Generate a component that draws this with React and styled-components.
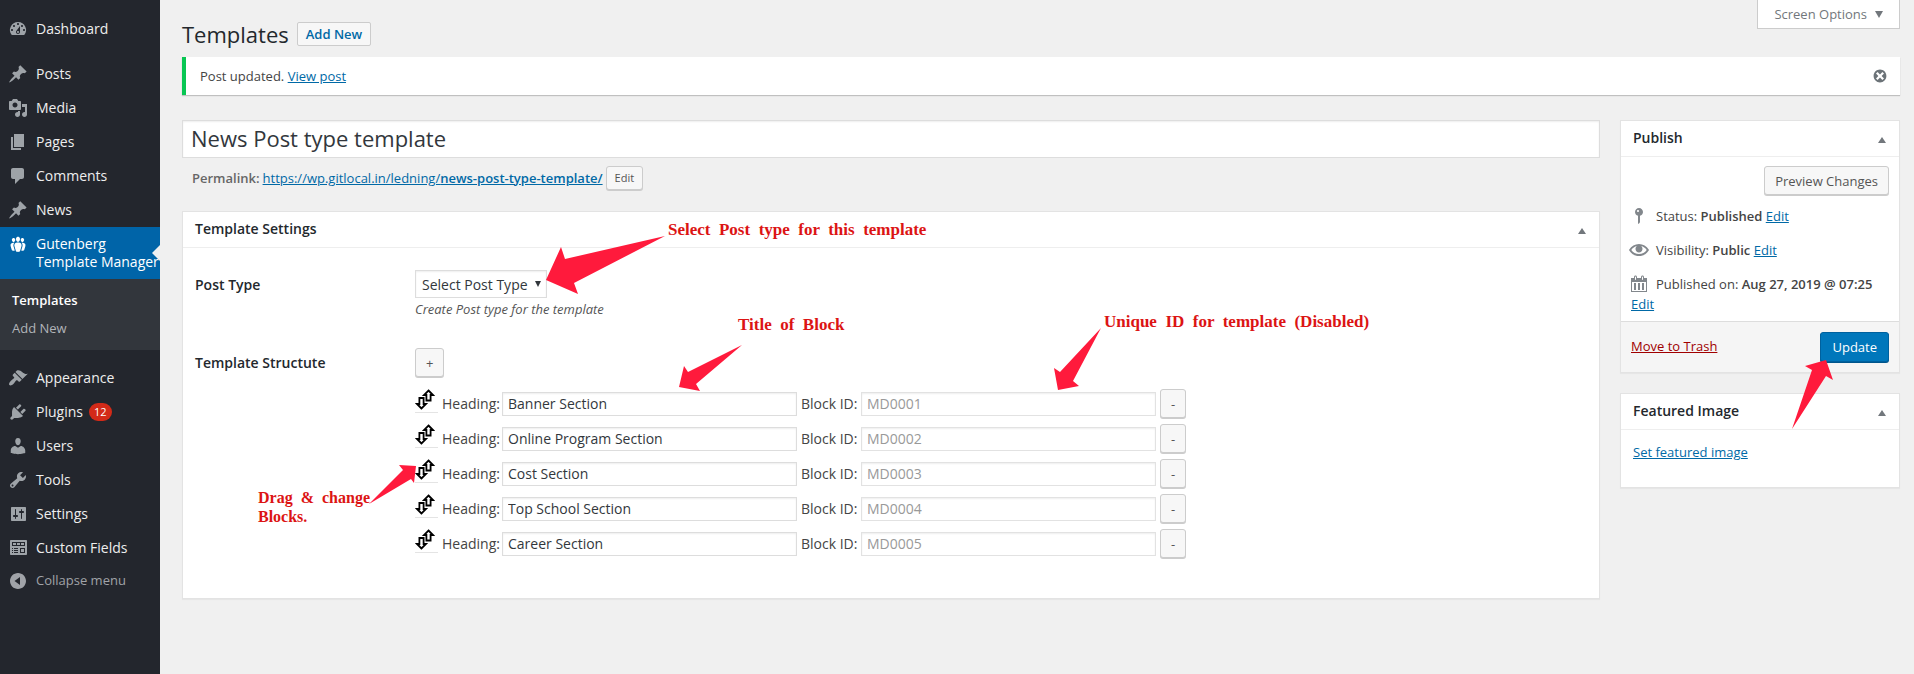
import React from "react";
import styled, { createGlobalStyle, css } from "styled-components";

const Global = createGlobalStyle`
  *, *::before, *::after { box-sizing: border-box; }
  html, body { margin: 0; padding: 0; background: #f0f0f0; }
  body, button, input, select {
    font-family: "Open Sans", "Noto Sans", sans-serif;
  }
  body { font-size: 13px; line-height: 20px; color: #444; }
  a { color: #0069a6; }
  strong { font-weight: 600; }
`;

const Page = styled.div`
  display: flex;
  align-items: stretch;
  min-height: 100vh;
`;

/* ---------- icons ---------- */

const ICONS = {
  dashboard:
    "M3.76 16h12.48A7.998 7.998 0 0 0 10 3a7.998 7.998 0 0 0-6.24 13zM10 4c.55 0 1 .45 1 1s-.45 1-1 1-1-.45-1-1 .45-1 1-1zM6 6c.55 0 1 .45 1 1s-.45 1-1 1-1-.45-1-1 .45-1 1-1zm8 0c.55 0 1 .45 1 1s-.45 1-1 1-1-.45-1-1 .45-1 1-1zm-5.37 5.55L12 7v6c0 1.1-.9 2-2 2s-2-.9-2-2c0-.57.24-1.08.63-1.45zM4 10c.55 0 1 .45 1 1s-.45 1-1 1-1-.45-1-1 .45-1 1-1zm12 0c.55 0 1 .45 1 1s-.45 1-1 1-1-.45-1-1 .45-1 1-1zm-5 3c0-.55-.45-1-1-1s-1 .45-1 1 .45 1 1 1 1-.45 1-1z",
  pin: "M10.44 3.02l1.82-1.82 6.36 6.35-1.83 1.82c-1.05-.68-2.48-.57-3.41.36l-.75.75c-.92.93-1.04 2.35-.35 3.41l-1.83 1.82-2.41-2.41-2.8 2.79c-.42.42-3.38 2.71-3.8 2.29s1.86-3.39 2.28-3.81l2.79-2.79L4.1 9.36l1.83-1.82c1.05.69 2.48.57 3.4-.36l.75-.75c.93-.92 1.05-2.35.36-3.41z",
  media:
    "M13 11V4c0-.55-.45-1-1-1h-1.67L9 1H5L3.67 3H2c-.55 0-1 .45-1 1v7c0 .55.45 1 1 1h10c.55 0 1-.45 1-1zM7 4.5c1.38 0 2.5 1.12 2.5 2.5S8.38 9.5 7 9.5 4.5 8.38 4.5 7 5.62 4.5 7 4.5zM14 6h5v10.5c0 1.38-1.12 2.5-2.5 2.5S14 17.88 14 16.5s1.12-2.5 2.5-2.5c.17 0 .34.02.5.05V9h-3V6zm-4 8.05V13h2v3.5c0 1.38-1.12 2.5-2.5 2.5S7 17.88 7 16.5 8.12 14 9.5 14c.17 0 .34.02.5.05z",
  pages: "M6 15V2h10v13H6zm-1 1h8v2H3V5h2v11z",
  comments:
    "M5 2h9c1.1 0 2 .9 2 2v7c0 1.1-.9 2-2 2h-2l-5 5v-5H5c-1.1 0-2-.9-2-2V4c0-1.1.9-2 2-2z",
  groups:
    "M8.03 4.46c-.29 1.28.55 3.46 1.97 3.46 1.41 0 2.25-2.18 1.96-3.46-.22-.98-1.08-1.63-1.96-1.63-.89 0-1.74.65-1.97 1.63zm-4.13.9c-.25 1.08.47 2.93 1.67 2.93s1.92-1.85 1.67-2.93c-.19-.83-.92-1.39-1.67-1.39s-1.48.56-1.67 1.39zm8.86 0c-.25 1.08.47 2.93 1.66 2.93 1.2 0 1.92-1.85 1.67-2.93-.19-.83-.92-1.39-1.67-1.39-.74 0-1.47.56-1.66 1.39zm-.59 11.43l1.25-4.3C14.2 10 12.71 8.47 10 8.47c-2.72 0-4.21 1.53-3.44 4.02l1.26 4.3C8.05 17.51 9 18 10 18c.98 0 1.94-.49 2.17-1.21zm-6.1-7.63c-.49.67-.96 1.83-.42 3.59l1.12 3.79c-.34.2-.77.31-1.2.31-.85 0-1.65-.41-1.85-1.03l-1.07-3.65c-.65-2.11.61-3.4 2.92-3.4.27 0 .54.02.79.06-.1.1-.2.22-.29.33zm8.35-.39c2.31 0 3.58 1.29 2.92 3.4l-1.07 3.65c-.2.62-1 1.03-1.85 1.03-.43 0-.86-.11-1.2-.31l1.11-3.77c.55-1.78.08-2.94-.42-3.61-.08-.11-.18-.23-.28-.33.25-.04.51-.06.79-.06z",
  appearance:
    "M14.48 11.06L7.41 3.99l1.5-1.5c.5-.56 2.3-.47 3.51.32 1.21.8 1.43 1.28 2.91 2.1 1.18.64 2.45 1.26 4.45.85zm-.71.71L6.7 4.7 4.93 6.47c-.39.39-.39 1.02 0 1.41l1.06 1.06c.39.39.39 1.03 0 1.42-.6.6-1.43 1.11-2.21 1.69-.35.26-.7.53-1.01.84C1.43 14.23.4 16.08 1.4 17.07c.99 1 2.84-.03 4.18-1.36.31-.31.58-.66.85-1.02.57-.78 1.08-1.61 1.69-2.21.39-.39 1.02-.39 1.41 0l1.06 1.06c.39.39 1.02.39 1.41 0z",
  plugins:
    "M13.11 4.36L9.87 7.6 8 5.73l3.24-3.24c.35-.34 1.05-.2 1.56.32.52.51.66 1.21.31 1.55zm-8 1.77l.91-1.12 9.01 9.01-1.19.84c-.71.71-2.63 1.16-3.82 1.16H6.14L4.9 17.26c-.59.59-1.54.59-2.12 0-.59-.58-.59-1.53 0-2.12l1.24-1.24v-3.88c0-1.13.4-3.19 1.09-3.89zm7.26 3.97l3.24-3.24c.34-.35 1.04-.21 1.55.31.52.51.66 1.21.31 1.55l-3.24 3.25z",
  users:
    "M10 9.25c-2.27 0-2.73-3.44-2.73-3.44C7 4.02 7.82 2 9.97 2c2.16 0 2.98 2.02 2.71 3.81 0 0-.41 3.44-2.68 3.44zm0 2.57L12.72 10c2.39 0 4.52 2.33 4.52 4.53v2.49s-3.65 1.13-7.24 1.13c-3.65 0-7.24-1.13-7.24-1.13v-2.49c0-2.25 1.94-4.48 4.47-4.48z",
  tools:
    "M16.68 9.77c-1.34 1.34-3.3 1.67-4.95.99l-5.41 6.52c-.99.99-2.59.99-3.58 0s-.99-2.59 0-3.57l6.52-5.42c-.68-1.65-.35-3.61.99-4.95 1.28-1.28 3.12-1.62 4.72-1.06l-2.89 2.89 2.82 2.82 2.86-2.87c.53 1.58.18 3.39-1.08 4.65zM3.81 16.21c.4.39 1.04.39 1.43 0 .4-.4.4-1.04 0-1.43-.39-.4-1.03-.4-1.43 0-.39.39-.39 1.03 0 1.43z",
  settings:
    "M18 16V4c0-.6-.4-1-1-1H4c-.6 0-1 .4-1 1v12c0 .6.4 1 1 1h13c.6 0 1-.4 1-1zM8 11h1c.55 0 1 .45 1 1s-.45 1-1 1H8v1.5c0 .28-.22.5-.5.5s-.5-.22-.5-.5V13H6c-.55 0-1-.45-1-1s.45-1 1-1h1V5.5c0-.28.22-.5.5-.5s.5.22.5.5V11zm5-2h-1c-.55 0-1-.45-1-1s.45-1 1-1h1V5.5c0-.28.22-.5.5-.5s.5.22.5.5V7h1c.55 0 1 .45 1 1s-.45 1-1 1h-1v5.5c0 .28-.22.5-.5.5s-.5-.22-.5-.5V9z",
  fields:
    "M19 16V3c0-.55-.45-1-1-1H3c-.55 0-1 .45-1 1v13c0 .55.45 1 1 1h15c.55 0 1-.45 1-1zM4 4h13v4H4V4zm1 1v2h3V5H5zm4 0v2h3V5H9zm4 0v2h3V5h-3zM4 10h1v1H4zm2 0h4v1H6zm6 0h5v5h-5v-5zM4 12h1v1H4zm2 0h4v1H6zm7-1v3h3v-3h-3zM4 14h1v1H4zm2 0h4v1H6z",
  collapse:
    "M10 2c4.42 0 8 3.58 8 8s-3.58 8-8 8-8-3.58-8-8 3.58-8 8-8zM12 6L6.500 10l5.500 4z",
  status:
    "M14 6c0 1.86-1.28 3.41-3 3.86V16c0 1-2 2-2 2V9.86c-1.72-.45-3-2-3-3.86 0-2.21 1.79-4 4-4s4 1.79 4 4zM8 5c0 .55.45 1 1 1s1-.45 1-1-.45-1-1-1-1 .45-1 1z",
  visibility:
    "M19.7 9.4C17.7 6 14 3.9 10 3.9S2.3 6 .3 9.4L0 10l.3.6c2 3.4 5.7 5.5 9.7 5.5s7.7-2.1 9.7-5.5l.3-.6-.3-.6zM10 14.1c-3.1 0-6-1.6-7.7-4.1C3.6 8 5.7 6.6 8 6.1c-.9.6-1.5 1.7-1.5 2.9 0 1.9 1.6 3.5 3.5 3.5s3.5-1.6 3.5-3.5c0-1.2-.6-2.3-1.5-2.9 2.3.5 4.4 1.9 5.7 3.9-1.7 2.5-4.6 4.1-7.700 4.100z",
  calendar:
    "M15 4h3v14H2V4h3V3c0-.83.67-1.5 1.5-1.5S8 2.170 8 3v1h4V3c0-.83.67-1.5 1.5-1.5S15 2.170 15 3v1zM6 3v2.500c0 .28.22.5.5.5s.5-.22.5-.5V3c0-.28-.22-.5-.5-.5S6 2.720 6 3zm7 0v2.500c0 .28.22.5.5.5s.5-.22.5-.5V3c0-.28-.22-.5-.5-.5s-.5.22-.5.5zm4 14V8H3v9h14zM7 16V9H5v7h2zm4 0V9H9v7h2zm4 0V9h-2v7h2z",
  dismiss:
    "M10 2c4.42 0 8 3.58 8 8s-3.58 8-8 8-8-3.58-8-8 3.58-8 8-8zm5 11l-3-3 3-3-2-2-3 3-3-3-2 2 3 3-3 3 2 2 3-3 3 3z",
};

const Svg = styled.svg`
  display: block;
  flex: none;
  fill: currentColor;
`;

function Icon({ name, size = 20 }) {
  return (
    <Svg width={size} height={size} viewBox="0 0 20 20" fillRule="evenodd" aria-hidden="true">
      <path d={ICONS[name]} />
    </Svg>
  );
}

/* ---------- sidebar ---------- */

const Sidebar = styled.nav`
  flex: none;
  width: 160px;
  padding-top: 12px;
  background: #23262d;
`;

const MenuLink = styled.a`
  position: relative;
  display: flex;
  gap: 8px;
  padding: 8px 0 8px 8px;
  font-size: 14px;
  line-height: 18px;
  text-decoration: none;
  color: ${(p) => (p.$active ? "#fff" : "#eee")};
  background: ${(p) => (p.$active ? "#0064a8" : "transparent")};
  white-space: nowrap;
  & > svg { color: ${(p) => (p.$active ? "#fff" : "#9ea3a8")}; height: 20px; margin: -1px 0; }
  ${(p) =>
    p.$active &&
    css`
      &::after {
        content: "";
        position: absolute;
        right: 0;
        top: 18px;
        border: 8px solid transparent;
        border-right-color: #f0f0f0;
      }
    `}
`;

const Separator = styled.div`
  height: 11px;
`;

const Submenu = styled.div`
  display: flex;
  flex-direction: column;
  padding: 7px 0 8px 12px;
  background: #32363c;
`;

const SubLink = styled.a`
  padding: 4px 0;
  font-size: 13px;
  line-height: 20px;
  text-decoration: none;
  font-weight: ${(p) => (p.$current ? 600 : 400)};
  color: ${(p) => (p.$current ? "#fff" : "#b1b4b9")};
`;

const Count = styled.span`
  align-self: center;
  margin: 0 -2px;
  padding: 0 5px;
  border-radius: 9px;
  min-width: 22px;
  text-align: center;
  background: #d32a18;
  color: #fff;
  font-size: 11px;
  line-height: 18px;
`;

const CollapseButton = styled.button`
  display: flex;
  gap: 8px;
  width: 100%;
  padding: 6px 0 8px 8px;
  border: 0;
  background: none;
  color: #a0a3a8;
  font-size: 13px;
  line-height: 18px;
  text-align: left;
`;

/* ---------- main area ---------- */

const Content = styled.div`
  flex: 1;
  min-width: 0;
  padding: 0 14px 24px 22px;
`;

const TopBar = styled.div`
  display: flex;
  justify-content: space-between;
  align-items: flex-start;
  height: 57px;
`;

const Heading = styled.div`
  display: flex;
  align-items: center;
  gap: 8px;
  padding-top: 18px;
`;

const Title = styled.h1`
  margin: 0;
  font-size: 22px;
  line-height: 32px;
  font-weight: 400;
  color: #23282d;
`;

const AddNew = styled.a`
  padding: 0 8px;
  border: 1px solid #ccc;
  border-radius: 2px;
  background: #f7f7f7;
  font-weight: 600;
  font-size: 13px;
  line-height: 22px;
  text-decoration: none;
`;

const ScreenOptions = styled.button`
  display: flex;
  align-items: center;
  gap: 8px;
  height: 29px;
  padding: 0 16px;
  border: 1px solid #ccc;
  border-top: 0;
  background: #fff;
  color: #72777c;
  font-size: 13px;
`;

const Triangle = styled.span`
  width: 0;
  height: 0;
  border: 4px solid transparent;
  ${(p) =>
    p.$up
      ? "border-top: 0; border-bottom: 6px solid #72777c;"
      : "border-bottom: 0; border-top: 7px solid #72777c;"}
`;

const Notice = styled.div`
  display: flex;
  justify-content: space-between;
  align-items: center;
  height: 38px;
  padding: 0 12px 0 14px;
  border-left: 4px solid #08c653;
  background: #fff;
  box-shadow: 0 1px 1px rgba(0, 0, 0, 0.2);
`;

const IconButton = styled.button`
  display: flex;
  padding: 0;
  border: 0;
  background: none;
  color: #6c7378;
`;

const Columns = styled.div`
  display: flex;
  align-items: flex-start;
  gap: 20px;
  margin-top: 25px;
`;

const Editor = styled.main`
  flex: 1;
  min-width: 0;
`;

const Side = styled.aside`
  flex: none;
  width: 280px;
  display: flex;
  flex-direction: column;
  gap: 20px;
`;

const TextInput = styled.input`
  height: 24px;
  width: 295px;
  padding: 0 5px;
  border: 1px solid #ddd;
  border-radius: 0;
  background: #fff;
  box-shadow: inset 0 1px 2px rgba(0, 0, 0, 0.07);
  color: #32373c;
  font-size: 14px;
  &:disabled { color: #999; border-color: #e2e2e2; }
`;

const TitleInput = styled(TextInput)`
  display: block;
  width: 100%;
  height: 38px;
  padding: 0 8px 2px;
  font-size: 22px;
`;

const Permalink = styled.div`
  display: flex;
  align-items: center;
  gap: 3px;
  height: 25px;
  margin: 7px 0 21px;
  padding-left: 10px;
  color: #666;
`;

const Button = styled.button`
  height: 29px;
  padding: 0 10px;
  border: 1px solid #ccc;
  border-radius: 3px;
  background: #f7f7f7;
  box-shadow: 0 1px 0 #ccc;
  color: #555;
  font-size: 13px;
`;

const SmallButton = styled(Button)`
  height: 24px;
  padding: 0 8px;
  font-size: 11px;
`;

const PrimaryButton = styled(Button)`
  height: 30px;
  padding: 0 11px;
  background: #0077bb;
  border-color: #00619e;
  box-shadow: 0 1px 0 #00568c;
  color: #fff;
`;

const Card = styled.section`
  position: relative;
  border: 1px solid #e3e3e3;
  background: #fff;
  box-shadow: 0 1px 1px rgba(0, 0, 0, 0.04);
`;

const CardHead = styled.header`
  display: flex;
  justify-content: space-between;
  align-items: center;
  height: 36px;
  padding: 0 13px 2px 12px;
  border-bottom: 1px solid #eee;
`;

const CardTitle = styled.h2`
  margin: 0;
  font-size: 14px;
  line-height: 20px;
  font-weight: 600;
  color: #23282d;
`;

const CardToggle = styled(IconButton)`
  padding-top: 5px;
`;

const Settings = styled.div`
  padding: 22px 12px 40px;
`;

const Setting = styled.div`
  display: grid;
  grid-template-columns: 220px 1fr;
  & + & { margin-top: 30px; }
`;

const SettingName = styled.div`
  padding-top: 5px;
  font-size: 14px;
  line-height: 20px;
  font-weight: 600;
  color: #23282d;
`;

const SelectWrap = styled.div`
  position: relative;
  width: 132px;
  &::after {
    content: "";
    position: absolute;
    right: 6px;
    top: 11px;
    border: 3px solid transparent;
    border-bottom: 0;
    border-top: 6px solid #32373c;
    pointer-events: none;
  }
`;

const Select = styled.select`
  appearance: none;
  display: block;
  width: 100%;
  height: 28px;
  padding: 0 0 0 6px;
  border: 1px solid #ddd;
  border-radius: 0;
  background: #fff;
  box-shadow: inset 0 1px 2px rgba(0, 0, 0, 0.07);
  color: #32373c;
  font-size: 14px;
`;

const Hint = styled.p`
  margin: 2px 0 0;
  font-size: 13px;
  line-height: 18px;
  font-style: italic;
  color: #555;
`;

const Blocks = styled.ul`
  display: flex;
  flex-direction: column;
  gap: 6px;
  margin: 12px 0 0;
  padding: 0;
  list-style: none;
`;

const Block = styled.li`
  display: flex;
  align-items: center;
  gap: 4px;
  height: 29px;
  font-size: 14px;
`;

const DragHandle = styled.span`
  display: flex;
  align-self: flex-start;
  height: 24px;
  width: 23px;
  border-bottom: 1px solid #e4e4e4;
  cursor: move;
`;

const Field = styled.label`
  display: grid;
  grid-template-columns: 60px auto;
  align-items: center;
  white-space: nowrap;
`;

const PublishBody = styled.div`
  display: flex;
  flex-direction: column;
  padding: 9px 10px 0;
`;

const Actions = styled.div`
  display: flex;
  justify-content: flex-end;
  margin-bottom: 4px;
`;

const Info = styled.div`
  padding: 7px 0;
  & > svg { float: left; margin: 0 7px 0 -2px; color: #82878c; }
`;

const PublishFoot = styled.footer`
  position: relative;
  display: flex;
  justify-content: space-between;
  align-items: flex-start;
  padding: 10px;
  border-top: 1px solid #ddd;
  background: #f5f5f5;
  height: 51px;
`;

const TrashLink = styled.a`
  color: #a00000;
  line-height: 28px;
`;

const FeaturedBody = styled.div`
  padding: 12px 12px 25px;
`;

/* ---------- callouts drawn over the form ---------- */

const ArrowSvg = styled.svg`
  position: absolute;
  z-index: 1;
  ${(p) => (p.$right ? `right: ${p.$right}px` : `left: ${p.$x}px`)};
  top: ${(p) => p.$y}px;
  fill: #ff1a3c;
  pointer-events: none;
`;

function Arrow({ x, y, right, w, h, points }) {
  return (
    <ArrowSvg $x={x} $y={y} $right={right} width={w} height={h} viewBox={`0 0 ${w} ${h}`} aria-hidden="true">
      <polygon points={points} />
    </ArrowSvg>
  );
}

const Note = styled.div`
  position: absolute;
  left: ${(p) => p.$x}px;
  top: ${(p) => p.$y}px;
  white-space: pre;
  font-family: "Liberation Serif", serif;
  font-weight: 700;
  font-size: ${(p) => (p.$compact ? 16 : 17)}px;
  line-height: 19px;
  color: #dc1414;
  pointer-events: none;
`;

const MENU_TOP = [
  ["pin", "Posts"],
  ["media", "Media"],
  ["pages", "Pages"],
  ["comments", "Comments"],
  ["pin", "News"],
];

const MENU_BOTTOM = [
  ["appearance", "Appearance"],
  ["plugins", "Plugins", 12],
  ["users", "Users"],
  ["tools", "Tools"],
  ["settings", "Settings"],
  ["fields", "Custom Fields"],
];

const BLOCKS = [
  ["Banner Section", "MD0001"],
  ["Online Program Section", "MD0002"],
  ["Cost Section", "MD0003"],
  ["Top School Section", "MD0004"],
  ["Career Section", "MD0005"],
];

function MenuItem({ icon, label, count }) {
  return (
    <MenuLink href="#">
      <Icon name={icon} />
      {label}
      {count && <Count>{count}</Count>}
    </MenuLink>
  );
}

function DragIcon() {
  return (
    <svg width="20" height="22" viewBox="0 0 20 22" aria-hidden="true" fill="#fff" stroke="#000" strokeWidth="1.8">
      <path d="M13.500 1.500L18 6H15.600V11.500H11.400V6H9z" />
      <path d="M6.500 19.500L2 15H4.400V9H8.600V15H11z" />
    </svg>
  );
}

function CardHeader({ title }) {
  return (
    <CardHead>
      <CardTitle>{title}</CardTitle>
      <CardToggle aria-label={`Toggle panel: ${title}`}>
        <Triangle $up />
      </CardToggle>
    </CardHead>
  );
}

export default function App() {
  return (
    <Page>
      <Global />
      <Sidebar>
        <MenuItem icon="dashboard" label="Dashboard" />
        <Separator />
        {MENU_TOP.map(([icon, label]) => (
          <MenuItem key={label} icon={icon} label={label} />
        ))}
        <MenuLink href="#" $active>
          <Icon name="groups" />
          <span>
            Gutenberg
            <br />
            Template Manager
          </span>
        </MenuLink>
        <Submenu>
          <SubLink href="#" $current>Templates</SubLink>
          <SubLink href="#">Add New</SubLink>
        </Submenu>
        <Separator />
        {MENU_BOTTOM.map(([icon, label, count]) => (
          <MenuItem key={label} icon={icon} label={label} count={count} />
        ))}
        <CollapseButton>
          <Icon name="collapse" />
          Collapse menu
        </CollapseButton>
      </Sidebar>

      <Content>
        <TopBar>
          <Heading>
            <Title>Templates</Title>
            <AddNew href="#">Add New</AddNew>
          </Heading>
          <ScreenOptions>
            Screen Options <Triangle />
          </ScreenOptions>
        </TopBar>

        <Notice>
          <span>
            Post updated. <a href="#">View post</a>
          </span>
          <IconButton aria-label="Dismiss this notice">
            <Icon name="dismiss" size={16} />
          </IconButton>
        </Notice>

        <Columns>
          <Editor>
            <TitleInput aria-label="Title" defaultValue="News Post type template" />
            <Permalink>
              <strong>Permalink:</strong>
              <a href="#">
                https://wp.gitlocal.in/ledning/<strong>news-post-type-template/</strong>
              </a>
              <SmallButton>Edit</SmallButton>
            </Permalink>

            <Card>
              <CardHeader title="Template Settings" />
              <Settings>
                <Setting>
                  <SettingName as="label" htmlFor="post-type">Post Type</SettingName>
                  <div>
                    <SelectWrap>
                      <Select id="post-type">
                        <option>Select Post Type</option>
                      </Select>
                    </SelectWrap>
                    <Hint>Create Post type for the template</Hint>
                  </div>
                </Setting>
                <Setting>
                  <SettingName>Template Structute</SettingName>
                  <div>
                    <Button>+</Button>
                    <Blocks>
                      {BLOCKS.map(([heading, id]) => (
                        <Block key={id}>
                          <DragHandle>
                            <DragIcon />
                          </DragHandle>
                          <Field>
                            Heading:
                            <TextInput defaultValue={heading} />
                          </Field>
                          <Field>
                            Block ID:
                            <TextInput disabled value={id} />
                          </Field>
                          <Button aria-label={`Remove ${heading}`}>-</Button>
                        </Block>
                      ))}
                    </Blocks>
                  </div>
                </Setting>
              </Settings>

              <Note $x={485} $y={8}>Select  Post  type  for  this  template</Note>
              <Arrow x={362} y={22} w={122} h={62} points="120,2 20,25 16,13 1,46 33,60 29,49" />
              <Note $x={555} $y={103}>Title  of  Block</Note>
              <Arrow x={493} y={132} w={68} h={50} points="66,1 12,28 8,22 3,43 24,47 20,40" />
              <Note $x={921} $y={100}>Unique  ID  for  template  (Disabled)</Note>
              <Arrow x={870} y={114} w={50} h={66} points="48,2 7,46 1,42 5,64 26,60 20,55" />
              <Note $x={75} $y={276} $compact>{"Drag  &  change\nBlocks."}</Note>
              <Arrow x={184} y={252} w={52} h={42} points="2,40 36,6 32,1 49,2 47,19 44,15" />
            </Card>
          </Editor>

          <Side>
            <Card>
              <CardHeader title="Publish" />
              <PublishBody>
                <Actions>
                  <Button>Preview Changes</Button>
                </Actions>
                <Info>
                  <Icon name="status" />
                  Status: <strong>Published</strong> <a href="#">Edit</a>
                </Info>
                <Info>
                  <Icon name="visibility" />
                  Visibility: <strong>Public</strong> <a href="#">Edit</a>
                </Info>
                <Info>
                  <Icon name="calendar" />
                  Published on: <strong>Aug 27, 2019 @ 07:25</strong> <a href="#">Edit</a>
                </Info>
              </PublishBody>
              <PublishFoot>
                <TrashLink href="#">Move to Trash</TrashLink>
                <PrimaryButton>Update</PrimaryButton>
                <Arrow right={65} y={36} w={44} h={72} points="2,71 22,12 15,8 36,2 43,22 36,18" />
              </PublishFoot>
            </Card>
            <Card>
              <CardHeader title="Featured Image" />
              <FeaturedBody>
                <a href="#">Set featured image</a>
              </FeaturedBody>
            </Card>
          </Side>
        </Columns>
      </Content>
    </Page>
  );
}
